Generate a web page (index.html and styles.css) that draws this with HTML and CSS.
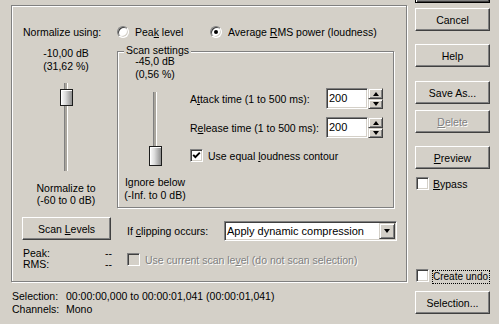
FILE: index.html
```html
<!DOCTYPE html>
<html>
<head>
<meta charset="utf-8">
<link rel="stylesheet" href="styles.css">
</head>
<body>
<div class="dialog">
  <div class="main">
    <div class="frame">
      <div class="head">
        <div class="head-label">Normalize using:</div>
        <div class="ropt ropt1"><span class="radio"></span><span>Pea<u>k</u> level</span></div>
        <div class="ropt"><span class="radio"><span class="dot"></span></span><span>Average <u>R</u>MS power (loudness)</span></div>
      </div>
      <div class="body">
        <div class="lcol">
          <div class="val">-10,00 dB<br>(31,62 %)</div>
          <div class="slider s1"><div class="thumb t1"></div></div>
          <div class="cap">Normalize to<br>(-60 to 0 dB)</div>
          <div class="btn scan"><span>Scan <u>L</u>evels</span></div>
          <div class="stats"><span>Peak:</span><span>--</span><span>RMS:</span><span>--</span></div>
        </div>
        <div class="rcol">
          <div class="group">
            <div class="legend">Scan settings</div>
            <div class="gbody">
              <div class="gl">
                <div class="val">-45,0 dB<br>(0,56 %)</div>
                <div class="slider s2"><div class="thumb t2"></div></div>
                <div class="cap2">Ignore below<br>(-Inf. to 0 dB)</div>
              </div>
              <div class="gr">
                <div class="spinrow">
                  <div class="slabel">A<u>t</u>tack time (1 to 500 ms):</div>
                  <div class="field">200</div>
                  <div class="spin"><div class="sb up"><span class="tri-up"></span></div><div class="sb dn"><span class="tri-dn"></span></div></div>
                </div>
                <div class="spinrow row2">
                  <div class="slabel">R<u>e</u>lease time (1 to 500 ms):</div>
                  <div class="field">200</div>
                  <div class="spin"><div class="sb up"><span class="tri-up"></span></div><div class="sb dn"><span class="tri-dn"></span></div></div>
                </div>
                <div class="chkrow row3">
                  <span class="chk"><svg width="9" height="9" viewBox="0 0 9 9"><polyline points="1.2,3.8 3.4,6.2 7.8,1.6" fill="none" stroke="#000" stroke-width="1.9"/></svg></span>
                  <span class="chklabel5">Use equal <u>l</u>oudness contour</span>
                </div>
              </div>
            </div>
          </div>
          <div class="clip">
            <div class="clabel">If <u>c</u>lipping occurs:</div>
            <div class="select"><span class="seltext">Apply dynamic compression</span><span class="selbtn"><span class="tri-dn"></span></span></div>
          </div>
          <div class="chkrow usecur">
            <span class="chk dis"></span>
            <span class="chklabel5 distext">Use current scan le<u>v</u>el (do not scan selection)</span>
          </div>
        </div>
      </div>
    </div>
    <div class="info">
      <span>Selection:</span><span>00:00:00,000 to 00:00:01,041 (00:00:01,041)</span>
      <span>Channels:</span><span>Mono</span>
    </div>
  </div>
  <div class="side">
    <div class="btn ok"></div>
    <div class="btn cancel"><span>Cancel</span></div>
    <div class="btn help"><span>Help</span></div>
    <div class="btn saveas"><span>Save As...</span></div>
    <div class="btn delete"><span class="distext"><u>D</u>elete</span></div>
    <div class="btn preview"><span><u>P</u>review</span></div>
    <div class="chkrow bypass"><span class="chk side-chk"></span><span class="chklabel4"><u>B</u>ypass</span></div>
    <div class="chkrow undo"><span class="chk side-chk"></span><span class="focus">Create undo</span></div>
    <div class="btn selection"><span>Selection...</span></div>
  </div>
</div>
</body>
</html>
```

FILE: styles.css
```css
* { box-sizing: border-box; }
html, body { margin: 0; padding: 0; }
body {
  background: #d4d0c8;
  font-family: "Liberation Sans", Arial, sans-serif;
  font-size: 10.5px;
  color: #000;
  width: 499px;
  height: 324px;
  overflow: hidden;
}
u { text-decoration: underline; text-underline-offset: 1px; }

.dialog { display: flex; align-items: flex-start; }
.main { margin: 5px 0 0 11px; width: 396px; flex: none; }

.frame {
  width: 396px;
  height: 277px;
  border: 1px solid #808080;
  box-shadow: 1px 1px 0 #fff, inset 1px 1px 0 #fff;
  padding: 20px 0 0 10px;
}

.head { display: flex; align-items: center; height: 12px; line-height: 12px; }
.head-label { width: 95px; padding-left: 1px; }
.ropt { display: flex; align-items: center; white-space: nowrap; }
.ropt1 { width: 93px; }
.radio {
  width: 12px; height: 12px; border-radius: 50%;
  background: #fff;
  border: 1px solid;
  border-color: #808080 #fff #fff #808080;
  box-shadow: inset 1px 1px 0 #404040, inset -1px -1px 0 #d4d0c8;
  display: flex; align-items: center; justify-content: center;
  margin-right: 6px; flex: none;
}
.dot { width: 4px; height: 4px; border-radius: 50%; background: #000; }

.body { display: flex; gap: 7px; }
.lcol { width: 88px; padding-top: 9px; display: flex; flex-direction: column; align-items: center; text-align: center; }
.val { line-height: 13px; white-space: nowrap; }
.cap { margin-top: 11px; line-height: 12px; white-space: nowrap; }

.slider {
  width: 13px;
  display: flex; flex-direction: column; align-items: center;
  background: linear-gradient(to right, #808080 0 1px, #a9a59d 1px 3px, #fff 3px 4px) center / 4px 100% no-repeat;
}
.s1 { height: 88px; margin-top: 10px; }
.s2 { height: 74px; margin-top: 11px; }
.thumb {
  width: 13px;
  border: 1px solid #1c1c1c;
  background: linear-gradient(to right, #fdfdfd 0%, #dcdcdc 40%, #8e8e8e 100%);
  box-shadow: inset 1px 1px 0 #fff;
}
.t1 { height: 17px; margin-top: 6px; }
.t2 { height: 20px; margin-top: 54px; }

.btn {
  width: 75px; height: 23px;
  border: 1px solid;
  border-color: #fff #404040 #404040 #fff;
  box-shadow: inset -1px -1px 0 #808080;
  display: flex; align-items: center; justify-content: center;
  line-height: 12px; white-space: nowrap; flex: none;
}
.scan { width: 89px; margin-top: 11px; align-self: flex-start; }

.stats {
  margin-top: 8px; margin-left: 1px; width: 89px;
  display: grid; grid-template-columns: 1fr auto;
  line-height: 11px; text-align: left; align-self: flex-start;
}

.rcol { width: 280px; padding-top: 13px; }
.group {
  width: 277px; height: 157px;
  border: 1px solid #808080;
  box-shadow: 1px 1px 0 #fff, inset 1px 1px 0 #fff;
}
.legend {
  width: max-content;
  margin: -7px 0 -3px 6px;
  padding: 0 2px;
  background: #d4d0c8;
  line-height: 10px;
  position: relative;
}
.gbody { display: flex; }
.gl { width: 70px; margin-left: 2px; padding-top: 3px; display: flex; flex-direction: column; align-items: center; text-align: center; }
.cap2 { margin-top: 10px; line-height: 13px; white-space: nowrap; }
.gr { padding-top: 36px; display: flex; flex-direction: column; }

.spinrow { display: flex; align-items: center; height: 21px; }
.row2 { margin-top: 8px; }
.slabel { width: 136px; white-space: nowrap; }
.field {
  width: 42px; height: 21px;
  background: #fff;
  border: 1px solid;
  border-color: #808080 #fff #fff #808080;
  box-shadow: inset 1px 1px 0 #404040, inset -1px -1px 0 #d4d0c8;
  padding-left: 2px;
  line-height: 19px;
  font-size: 11px;
}
.spin { width: 15px; height: 21px; display: flex; flex-direction: column; }
.sb {
  border: 1px solid;
  border-color: #d4d0c8 #404040 #404040 #d4d0c8;
  box-shadow: inset 1px 1px 0 #fff, inset -1px -1px 0 #808080;
  display: flex; align-items: center; justify-content: center;
}
.sb.up { height: 11px; }
.sb.dn { height: 10px; }
.tri-up { width: 0; height: 0; border-left: 3.5px solid transparent; border-right: 3.5px solid transparent; border-bottom: 4px solid #000; }
.tri-dn { width: 0; height: 0; border-left: 3.5px solid transparent; border-right: 3.5px solid transparent; border-top: 4px solid #000; }

.chkrow { display: flex; align-items: center; height: 13px; white-space: nowrap; }
.row3 { margin-top: 11px; }
.chk {
  width: 13px; height: 13px; flex: none;
  background: #fff;
  border: 1px solid;
  border-color: #808080 #fff #fff #808080;
  box-shadow: inset 1px 1px 0 #404040, inset -1px -1px 0 #d4d0c8;
  display: flex; align-items: center; justify-content: center;
}
.chk svg { display: block; }
.chk.dis { background: #d4d0c8; }
.chklabel5 { margin-left: 5px; line-height: 12px; }
.chklabel4 { margin-left: 4px; line-height: 12px; }
.distext { color: #808080; text-shadow: 1px 1px 0 #fff; }

.clip { display: flex; align-items: center; height: 20px; margin-top: 13px; }
.clabel { width: 107px; padding-left: 10px; white-space: nowrap; }
.select {
  width: 173px; height: 20px;
  background: #fff;
  border: 1px solid;
  border-color: #808080 #fff #fff #808080;
  box-shadow: inset 1px 1px 0 #404040, inset -1px -1px 0 #d4d0c8;
  display: flex; align-items: center; justify-content: space-between;
  padding: 1px 1px 1px 2px;
}
.seltext { white-space: nowrap; font-size: 11px; }
.selbtn {
  width: 16px; height: 16px;
  border: 1px solid;
  border-color: #d4d0c8 #404040 #404040 #d4d0c8;
  box-shadow: inset 1px 1px 0 #fff, inset -1px -1px 0 #808080;
  background: #d4d0c8;
  display: flex; align-items: center; justify-content: center;
}
.usecur { margin-top: 12px; padding-left: 10px; }

.info {
  margin-top: 8px; padding-left: 1px;
  display: grid; grid-template-columns: 54px auto;
  line-height: 13px; white-space: nowrap;
}

.side { margin-left: 8px; width: 84px; display: flex; flex-direction: column; flex: none; }
.ok {
  margin-top: -20px;
  border: 1px solid #000;
  box-shadow: inset 1px 1px 0 #fff, inset -1px -1px 0 #404040, inset -2px -2px 0 #808080;
}
.cancel { margin-top: 5px; }
.help { margin-top: 13px; }
.saveas { margin-top: 14px; }
.delete { margin-top: 6px; }
.preview { margin-top: 13px; }
.bypass { margin-top: 8px; }
.side-chk { margin-left: 1px; }
.undo { margin-top: 79px; align-items: flex-start; }
.focus { margin: 1px 0 0 3px; border: 1px dotted #000; padding: 0 1px 0 0; line-height: 12px; font-size: 10px; }
.selection { margin-top: 9px; }
```
